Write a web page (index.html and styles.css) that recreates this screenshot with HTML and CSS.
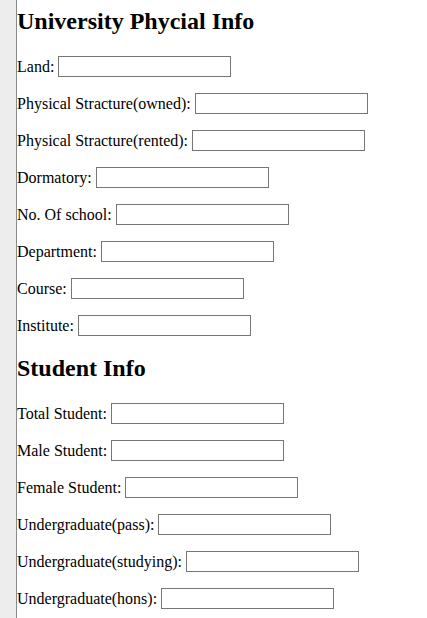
FILE: index.html
```html
<!DOCTYPE html>
<html>
<head>
<meta charset="utf-8">
<title>University Info</title>
<link rel="stylesheet" href="styles.css">
</head>
<body>
<div class="layout">
  <aside class="rail"></aside>
  <main class="content">
    <h2 class="section-title first">University Phycial Info</h2>
    <p class="field"><label>Land:</label><input type="text"></p>
    <p class="field"><label>Physical Stracture(owned):</label><input type="text"></p>
    <p class="field"><label>Physical Stracture(rented):</label><input type="text"></p>
    <p class="field"><label>Dormatory:</label><input type="text"></p>
    <p class="field"><label>No. Of school:</label><input type="text"></p>
    <p class="field"><label>Department:</label><input type="text"></p>
    <p class="field"><label>Course:</label><input type="text"></p>
    <p class="field"><label>Institute:</label><input type="text"></p>
    <h2 class="section-title">Student Info</h2>
    <p class="field"><label>Total Student:</label><input type="text"></p>
    <p class="field"><label>Male Student:</label><input type="text"></p>
    <p class="field"><label>Female Student:</label><input type="text"></p>
    <p class="field"><label>Undergraduate(pass):</label><input type="text"></p>
    <p class="field"><label>Undergraduate(studying):</label><input type="text"></p>
    <p class="field"><label>Undergraduate(hons):</label><input type="text"></p>
  </main>
</div>
</body>
</html>
```
FILE: styles.css
```css
html, body {
  margin: 0;
  padding: 0;
  background: #fff;
}
body {
  font-family: "Liberation Serif", "Times New Roman", serif;
  font-size: 16px;
  color: #000;
}
.layout {
  display: flex;
  min-height: 100vh;
}
.rail {
  width: 16px;
  flex: none;
  background: #ededed;
  border-right: 1px solid #8a8a8a;
}
.content {
  flex: 1;
  padding-top: 8px;
  padding-bottom: 1px;
}
.section-title {
  font-size: 24px;
  font-weight: bold;
  margin: 19.92px 0;
  line-height: 27.6px;
}
.section-title.first {
  margin-top: 0;
}
.field {
  display: flex;
  align-items: flex-start;
  gap: 4px;
  margin: 16px 0;
  line-height: 21px;
}
.field input {
  box-sizing: border-box;
  width: 173px;
  height: 21px;
  border: 1px solid #767676;
  padding: 1px 2px;
  margin: 0;
  font-family: "Liberation Sans", Arial, sans-serif;
  font-size: 13.33px;
  background: #fff;
}
```
